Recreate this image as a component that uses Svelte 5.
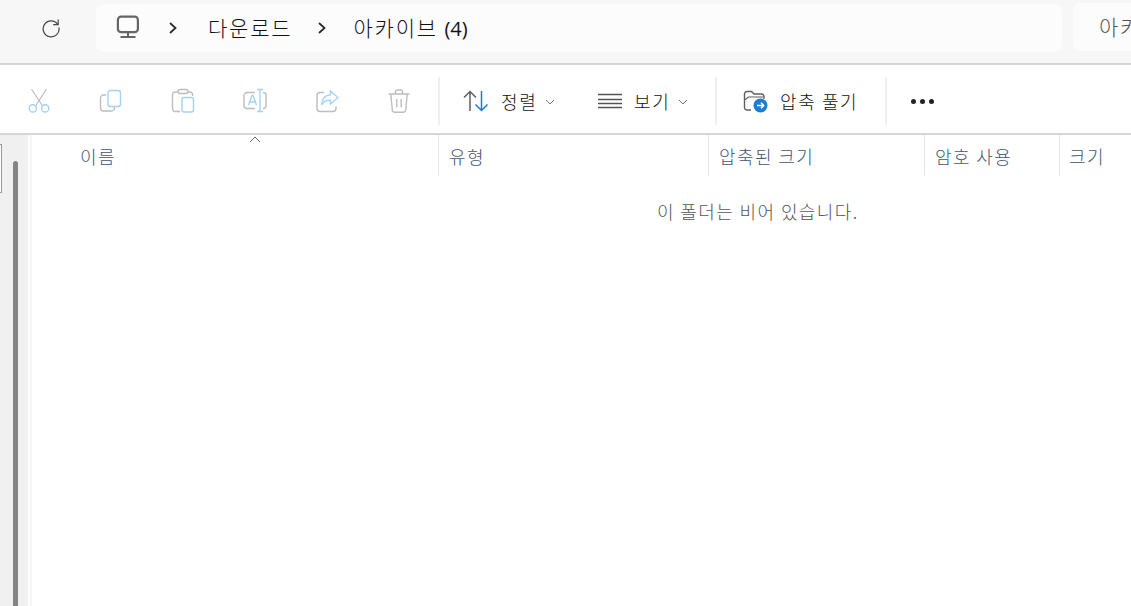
<script>
  const columns = [
    { label: '이름', width: 407, pad: 48 },
    { label: '유형', width: 270, pad: 10 },
    { label: '압축된 크기', width: 216, pad: 10 },
    { label: '암호 사용', width: 135, pad: 10 },
    { label: '크기', width: 72, pad: 9 }
  ];
</script>

<div class="window">
  <header class="topbar">
    <button class="refresh" aria-label="새로 고침">
      <svg width="22" height="22" viewBox="0 0 22 22" fill="none" stroke="#444" stroke-width="1.2">
        <path d="M17.6 8.2A8 8 0 1 0 19 11.5" />
        <path d="M18.2 3.6v5h-5" />
      </svg>
    </button>
    <nav class="crumbs">
      <svg class="pc" width="24" height="24" viewBox="0 0 24 24" fill="none" stroke="#666" stroke-width="2.2">
        <rect x="1.9" y="1.6" width="20" height="15.600" rx="3.200" />
        <path d="M12 17.500v4" stroke-width="2" />
        <path d="M4.500 22h15" stroke-width="2" />
      </svg>
      <svg class="chev first" width="10" height="14" viewBox="0 0 10 14" fill="none" stroke="#2b2b2b" stroke-width="1.800"><path d="M2 2l5.500 5L2 12" /></svg>
      <span class="crumb">다운로드</span>
      <svg class="chev second" width="10" height="14" viewBox="0 0 10 14" fill="none" stroke="#2b2b2b" stroke-width="1.800"><path d="M2 2l5.500 5L2 12" /></svg>
      <span class="crumb last">아카이브 <span class="count">(4)</span></span>
    </nav>
    <div class="search">아카이브 (4) 검색</div>
  </header>

  <div class="toolbar">
    <div class="edit">
      <span class="cell">
        <svg width="24" height="26" viewBox="0 0 24 26" fill="none" stroke="#bdbdbd" stroke-width="1.200">
          <path d="M4.500 1l11 17M19.500 1l-11 17" />
          <circle cx="5.800" cy="20.400" r="3.600" stroke="#a5d2f5" stroke-width="1.400" />
          <circle cx="18.200" cy="20.400" r="3.600" stroke="#a5d2f5" stroke-width="1.400" />
        </svg>
      </span>
      <span class="cell">
        <svg width="24" height="24" viewBox="0 0 24 24" fill="none" stroke-width="1.400">
          <path d="M7 6H4.500A3 3 0 0 0 1.500 9v10a3 3 0 0 0 3 3h8a3 3 0 0 0 3-3v-1" stroke="#bdbdbd" />
          <rect x="9" y="1.500" width="12.500" height="16" rx="2.500" stroke="#a5d2f5" fill="#fdfeff" />
        </svg>
      </span>
      <span class="cell">
        <svg width="24" height="26" viewBox="0 0 24 26" fill="none" stroke-width="1.400">
          <path d="M7 4H4a2.500 2.500 0 0 0-2.500 2.500V21A2.500 2.500 0 0 0 4 23.500h5M17 4h2a2.500 2.500 0 0 1 2.500 2.500V8" stroke="#bdbdbd" />
          <rect x="7" y="1.500" width="10" height="4" rx="2" stroke="#bdbdbd" />
          <rect x="11" y="9.500" width="11.500" height="14.500" rx="2" stroke="#a5d2f5" fill="#fdfeff" />
        </svg>
      </span>
      <span class="cell">
        <svg width="26" height="26" viewBox="0 0 26 26" fill="none" stroke-width="1.400">
          <path d="M13 4.500H5a3 3 0 0 0-3 3v10a3 3 0 0 0 3 3h8M21 4.500a3 3 0 0 1 3 3v10a3 3 0 0 1-3 3" stroke="#bdbdbd" />
          <path d="M6.500 17l3.500-9.500h1l3.500 9.500M8 14h5.500" stroke="#a5d2f5" />
          <path d="M15 1.500h6M18 1.500v22M15 23.500h6" stroke="#a5d2f5" />
        </svg>
      </span>
      <span class="cell">
        <svg width="24" height="24" viewBox="0 0 24 24" fill="none" stroke-width="1.400">
          <path d="M9 3.500H5a3 3 0 0 0-3 3v13a3 3 0 0 0 3 3h13a3 3 0 0 0 3-3v-2" stroke="#bdbdbd" />
          <path d="M15.500 2l7.500 6.500-7.500 6.500v-3.800C11 11 8.500 12.500 6.500 16c.5-6 4-9.800 9-10.200z" stroke="#a5d2f5" />
        </svg>
      </span>
      <span class="cell">
        <svg width="24" height="26" viewBox="0 0 24 26" fill="none" stroke="#bdbdbd" stroke-width="1.400">
          <path d="M1.500 6h21M8.500 5.500V4a2 2 0 0 1 2-2h3a2 2 0 0 1 2 2v1.500" />
          <path d="M3.800 6l1.500 16a2.500 2.500 0 0 0 2.500 2.200h8.400a2.500 2.500 0 0 0 2.500-2.200l1.500-16" />
          <path d="M9.800 11v8.500M14.200 11v8.500" />
        </svg>
      </span>
    </div>
    <span class="sep"></span>
    <button class="tool sort">
      <svg width="26" height="24" viewBox="0 0 26 24" fill="none" stroke-width="1.500">
        <path d="M7 22V2.500M1 8.500l6-6 6 6" stroke="#5f5f5f" />
        <path d="M18.500 2v19.500M12.500 15.500l6 6 6-6" stroke="#1a7fd4" />
      </svg>
      <span class="tool-label">정렬</span>
      <svg class="caret" width="10" height="6" viewBox="0 0 10 6" fill="none" stroke="#777" stroke-width="1"><path d="M1 1l4 4 4-4" /></svg>
    </button>
    <button class="tool view">
      <svg width="24" height="16" viewBox="0 0 24 16" fill="none" stroke-width="1.300">
        <path d="M0 1.500h24M0 6.500h24M0 10.500h24" stroke="#555" />
        <path d="M0 14.500h24" stroke="#555" stroke-width="1.500" />
      </svg>
      <span class="tool-label">보기</span>
      <svg class="caret" width="10" height="6" viewBox="0 0 10 6" fill="none" stroke="#777" stroke-width="1"><path d="M1 1l4 4 4-4" /></svg>
    </button>
    <span class="sep"></span>
    <button class="tool extract">
      <svg width="25" height="24" viewBox="0 0 25 24" fill="none">
        <path d="M8 21H4a2.500 2.500 0 0 1-2.500-2.500V5A2.500 2.500 0 0 1 4 2.500h4.500L11 5h7.500A2.500 2.500 0 0 1 21 7.500V10" stroke="#5f5f5f" stroke-width="1.400" />
        <path d="M1.500 11l4-3h15" stroke="#5f5f5f" stroke-width="1.200" />
        <circle cx="17.500" cy="16.500" r="7" fill="#1a7fd4" />
        <path d="M14 16.500h6.500M18 13.800l2.700 2.700-2.700 2.700" stroke="#fff" stroke-width="1.500" />
      </svg>
      <span class="tool-label">압축 풀기</span>
    </button>
    <span class="sep"></span>
    <div class="more" aria-label="더 보기"><i></i><i></i><i></i></div>
  </div>

  <div class="main">
    <aside class="rail">
      <span class="rail-box"></span>
      <span class="thumb"></span>
    </aside>
    <section class="list">
      <div class="heads">
        {#each columns as c}
          <div class="head" style="width:{c.width}px;padding-left:{c.pad}px">{c.label}</div>
        {/each}
        <svg class="sort-up" width="12" height="7" viewBox="0 0 12 7" fill="none" stroke="#666" stroke-width="1"><path d="M1 6l5-5 5 5" /></svg>
      </div>
      <p class="empty">이 폴더는 비어 있습니다.</p>
    </section>
  </div>
</div>

<style>
  :global(body) {
    margin: 0;
    background: #fff;
  }
  .window {
    width: 1131px;
    height: 606px;
    overflow: hidden;
    display: flex;
    flex-direction: column;
    font-family: "Noto Sans CJK KR", "Liberation Sans", sans-serif;
    font-weight: 300;
    color: #111;
  }
  button {
    border: 0;
    background: none;
    padding: 0;
    font: inherit;
    color: inherit;
  }
  .topbar {
    height: 63px;
    flex: none;
    display: flex;
    align-items: flex-start;
    background: #f7f7f7;
    border-bottom: 2px solid #d6d6d6;
  }
  .refresh {
    width: 22px;
    height: 22px;
    margin: 16px 34px 0 40px;
  }
  .crumbs {
    width: 966px;
    height: 48px;
    margin-top: 4px;
    flex: none;
    display: flex;
    align-items: center;
    background: #fcfcfc;
    border-radius: 7px;
    font-size: 21px;
    letter-spacing: 1.8px;
  }
  .pc {
    margin: 0 0 2px 20px;
    flex: none;
  }
  .chev {
    flex: none;
  }
  .chev.first {
    margin: 0 0 0 28px;
  }
  .chev.second {
    margin: 0 0 0 25px;
  }
  .crumb {
    margin: 0 0 3px 30px;
    white-space: nowrap;
  }
  .crumb.last {
    margin-left: 26px;
  }
  .count {
    font-family: "Open Sans", sans-serif;
    font-size: 20px;
    font-weight: 400;
    letter-spacing: 0;
  }
  .search {
    width: 120px;
    height: 48px;
    margin: 3px 0 0 11px;
    padding-left: 26px;
    box-sizing: border-box;
    flex: none;
    line-height: 46px;
    background: #fcfcfc;
    border-radius: 7px;
    color: #555;
    font-size: 21px;
    letter-spacing: 1.8px;
    white-space: nowrap;
    overflow: hidden;
  }
  .toolbar {
    height: 70px;
    box-sizing: border-box;
    padding-top: 4px;
    flex: none;
    display: flex;
    align-items: center;
    background: #fff;
    border-bottom: 2px solid #d6d6d6;
  }
  .edit {
    width: 438px;
    padding-left: 3px;
    box-sizing: border-box;
    display: grid;
    grid-template-columns: repeat(6, 72px);
    flex: none;
  }
  .cell {
    display: flex;
    justify-content: center;
    align-items: center;
  }
  .sep {
    width: 2px;
    height: 48px;
    flex: none;
    background: #efefef;
  }
  .tool {
    display: flex;
    align-items: center;
    flex: none;
    white-space: nowrap;
    box-sizing: border-box;
  }
  .sort {
    width: 158px;
    padding-left: 23px;
  }
  .view {
    width: 117px;
  }
  .extract {
    width: 168px;
    padding-left: 26px;
  }
  .tool-label {
    margin: 0 0 1px 12px;
    font-size: 18px;
    line-height: 24px;
    letter-spacing: 1.6px;
  }
  .caret {
    margin-left: 8px;
    margin-top: 2px;
  }
  .more {
    display: flex;
    gap: 4px;
    margin-left: 24px;
  }
  .more i {
    width: 5px;
    height: 5px;
    border-radius: 50%;
    background: #222;
  }
  .main {
    flex: 1;
    display: flex;
    min-height: 0;
  }
  .rail {
    position: relative;
    width: 28px;
    flex: none;
    background: #f0f0f0;
    border-right: 2px solid #fdfdfd;
  }
  .rail-box {
    position: absolute;
    left: 0;
    top: 9px;
    width: 1px;
    height: 47px;
    background: #fbfbfb;
    border: 1px solid #9a9a9a;
    border-left: 0;
  }
  .thumb {
    position: absolute;
    left: 13px;
    top: 26px;
    bottom: 0;
    width: 5px;
    background: #858585;
    border-radius: 3px 3px 0 0;
  }
  .list {
    flex: 1;
    min-width: 0;
    border-left: 2px solid #f5f5f5;
  }
  .heads {
    position: relative;
    height: 41px;
    display: flex;
  }
  .head {
    box-sizing: border-box;
    flex: none;
    height: 41px;
    line-height: 43px;
    font-size: 18px;
    color: #3f5673;
    letter-spacing: 1.4px;
    border-right: 1px solid #e5e5e5;
    white-space: nowrap;
  }
  .head:last-of-type {
    border-right: 0;
  }
  .sort-up {
    position: absolute;
    left: 217px;
    top: 1px;
  }
  .empty {
    margin: 23px 0 0;
    padding-left: 625px;
    font-size: 18px;
    line-height: 25px;
    color: #555;
    letter-spacing: 1.4px;
    white-space: nowrap;
  }
</style>
